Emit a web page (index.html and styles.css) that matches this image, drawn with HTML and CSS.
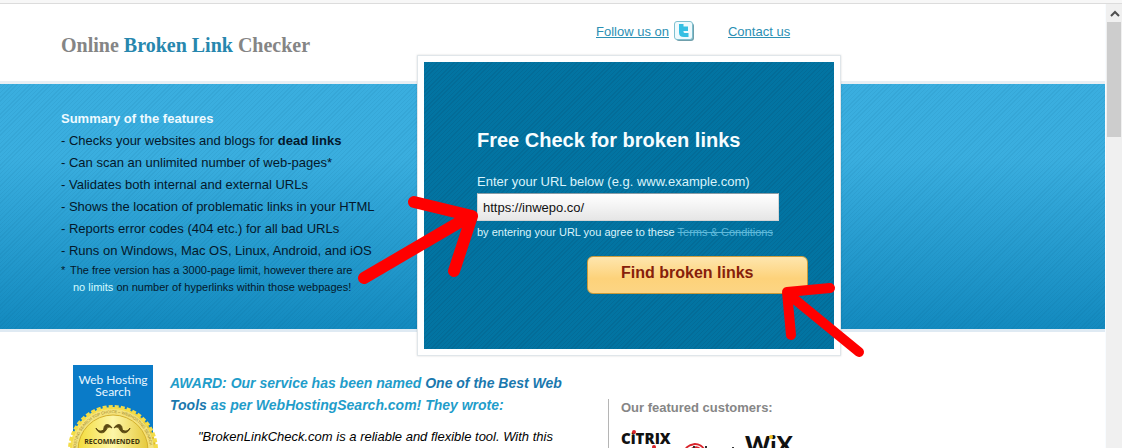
FILE: index.html
```html
<!DOCTYPE html>
<html lang="en">
<head>
  <meta charset="UTF-8" />
  <title>Online Broken Link Checker</title>
  <link rel="stylesheet" href="styles.css">
</head>
<body>
  <div class="topline"></div>

  <div class="window">
    <div class="page">

      <header>
        <h1>Online <span>Broken Link</span> Checker</h1>
        <nav>
          <a href="#follow">Follow us on</a>
          <a href="#twitter" class="twitter" aria-label="Twitter">
            <svg width="20" height="20" viewBox="0 0 20 20">
              <rect x="2" y="2" width="18" height="18" rx="3" fill="#6f9fab"/>
              <rect x=".5" y=".5" width="18" height="18" rx="2.500" fill="#effafd" stroke="#7fc0d0"/>
              <path d="M5 3v8.500Q5 16 10 16h4.500v-4H11Q9.500 12 9.500 10.500V10H14V5.500H9.500V3z" fill="#35bfe3"/>
            </svg>
          </a>
          <a href="#contact" class="contact">Contact us</a>
        </nav>
      </header>

      <!-- HERO -->
      <section class="hero">
        <div class="features">
          <h2>Summary of the features</h2>
          <ul>
            <li>- Checks your websites and blogs for <b>dead links</b></li>
            <li>- Can scan an unlimited number of web-pages*</li>
            <li>- Validates both internal and external URLs</li>
            <li>- Shows the location of problematic links in your HTML</li>
            <li>- Reports error codes (404 etc.) for all bad URLs</li>
            <li>- Runs on Windows, Mac OS, Linux, Android, and iOS</li>
          </ul>
          <div class="note">
            <span>*</span>
            <p>The free version has a 3000-page limit, however there are</p>
            <p class="limits"><a href="#pricing">no limits</a> on number of hyperlinks within those webpages!</p>
          </div>
        </div>

        <form class="checker">
          <h2>Free Check for broken links</h2>
          <label for="url">Enter your URL below (e.g. www.example.com)</label>
          <input type="text" id="url" value="https://inwepo.co/">
          <p>by entering your URL you agree to these <a href="#terms">Terms &amp; Conditions</a></p>
          <button type="button">Find broken links</button>
        </form>
      </section>

      <!-- AWARD + CUSTOMERS -->
      <section class="content">
        <svg class="badge" width="92" height="130" viewBox="0 0 92 130">
          <defs>
            <linearGradient id="gold" x1="0" y1="0" x2="1" y2="1">
              <stop offset="0" stop-color="#fff27a"/>
              <stop offset=".4" stop-color="#f0d43a"/>
              <stop offset="1" stop-color="#c79a17"/>
            </linearGradient>
            <linearGradient id="shine" x1="0" y1="0" x2="1" y2="0">
              <stop offset="0" stop-color="#f3dc3c"/>
              <stop offset=".5" stop-color="#fdf6a8"/>
              <stop offset="1" stop-color="#e6c93c"/>
            </linearGradient>
            <path id="ring" d="M9 85a37 37 0 0 1 74 0"/>
          </defs>
          <rect x="6" width="80" height="130" fill="#0a7bc8"/>
          <text class="badge-title" x="46" y="19">Web Hosting</text>
          <text class="badge-title" x="46" y="31">Search</text>
          <circle cx="46" cy="85" r="43" fill="url(#gold)"/>
          <circle cx="46" cy="85" r="43" fill="none" stroke="#f3dc48" stroke-width="4" stroke-dasharray="4 2"/>
          <circle cx="46" cy="85" r="41" fill="#f4e27c"/>
          <text class="badge-ring"><textPath href="#ring">HOSTING SEARCH TOP CHOICE – WEBHOSTING SEARCH</textPath></text>
          <circle cx="46" cy="85" r="35" fill="url(#shine)" stroke="#d3b02e"/>
          <path d="M45 63c-3-5-8-4-8 0s-6 4-8 0c2 6 8 6 10 2s4-3 6-2zM47 63c3-5 8-4 8 0s6 4 8 0c-2 6-8 6-10 2s-4-3-6-2z" fill="#5b4a12" stroke="#5b4a12"/>
          <text class="badge-label" x="45" y="79">RECOMMENDED</text>
        </svg>

        <div class="award">
          <h3>AWARD: Our service has been named <a href="#award">One of the Best Web Tools</a> as per WebHostingSearch.com! They wrote:</h3>
          <blockquote>"BrokenLinkCheck.com is a reliable and flexible tool. With this</blockquote>
        </div>

        <aside class="customers">
          <h3>Our featured customers:</h3>
          <svg width="180" height="44" viewBox="0 0 180 44">
            <text class="citrix" x="0" y="23">CiTRIX</text>
            <circle cx="13" cy="11" r="2" fill="#d8232a"/>
            <circle cx="33" cy="26" r="2" fill="#d8232a"/>
            <path d="M63 32a11 11 0 0 1 21-2M69 31a6 6 0 0 1 10-3" fill="none" stroke="#d8232a" stroke-width="2"/>
            <path d="M73 25v8M85 25v10M112 26v10" stroke="#333" stroke-width="2"/>
            <text class="wix" x="124" y="33">WiX</text>
            <circle cx="150" cy="16" r="2" fill="#f4c525"/>
          </svg>
        </aside>
      </section>
    </div>

    <div class="scrollbar">
      <svg width="16" height="17" viewBox="0 0 16 17">
        <path d="M4 11l4-4 4 4" fill="none" stroke="#505050" stroke-width="2"/>
      </svg>
      <div class="thumb"></div>
    </div>
  </div>

  <!-- hand drawn pointers on top of the page -->
  <svg class="arrows" width="1122" height="448" viewBox="0 0 1122 448">
    <path d="M364 278L470 216M414 202l58 14-18 55" stroke-width="12"/>
    <path d="M859 352L787 293M830 288l-43 4 4 43" stroke-width="10"/>
  </svg>
</body>
</html>
```

FILE: styles.css
```css
* {
  box-sizing: border-box;
}

body {
  display: flex;
  flex-direction: column;
  height: 100vh;
  margin: 0;
  overflow: hidden;
  background: #fff;
  font-family: "Liberation Sans", Arial, sans-serif;
  font-size: 13px;
}

h1, h2, h3, p, ul, blockquote {
  margin: 0;
  padding: 0;
}

.topline {
  flex: none;
  height: 4px;
  background: #f7f7f7;
  border-bottom: 1px solid #dcdcdc;
}

.window {
  display: flex;
  flex: 1;
  min-height: 0;
}

.page {
  flex: 1;
  overflow: hidden;
}

header {
  display: flex;
  height: 80px;
  padding-left: 61px;
  border-bottom: 3px solid #e8eff4;
}

h1 {
  width: 535px;
  padding-top: 29px;
  font: bold 20px/24px "Liberation Serif", "Times New Roman", serif;
  color: #858585;
}

h1 span {
  color: #2787ae;
}

nav {
  display: flex;
  align-items: center;
  height: 20px;
  margin-top: 17px;
}

nav a {
  color: #2b8fb3;
}

.twitter {
  height: 20px;
  margin-left: 5px;
}

.contact {
  margin-left: 34px;
}

/* hero */
.hero {
  display: flex;
  height: 248px;
  padding-left: 61px;
  border-bottom: 3px solid #dfeaf3;
  background:
    repeating-linear-gradient(135deg, rgba(0, 80, 120, 0.08) 0 1px, transparent 1px 3px),
    linear-gradient(#3aaedf 30%, #138abf);
}

.features {
  width: 356px;
  padding-top: 24px;
  line-height: 22px;
  color: #04182b;
}

.features h2 {
  font-size: 13px;
  color: #eefaff;
}

.features ul {
  list-style: none;
}

.note {
  display: grid;
  grid-template-columns: 9px 1fr;
  font-size: 11px;
  line-height: 17px;
}

.limits {
  grid-column: 2;
  padding-left: 3px;
}

.note a {
  color: #d5fbff;
  text-decoration: none;
}

.checker {
  display: flex;
  flex-direction: column;
  align-items: flex-start;
  width: 424px;
  height: 301px;
  margin-top: -29px;
  padding: 64px 26px 0 53px;
  border: 7px solid #fff;
  outline: 1px solid #e0e6ea;
  outline-offset: -1px;
  box-shadow: 0 0 2px rgba(0, 0, 0, 0.15);
  background: repeating-linear-gradient(135deg, #036c98 0 1px, #0274a2 1px 3px);
  color: #d9f3fb;
}

.checker h2 {
  font-size: 20px;
  line-height: 28px;
  color: #f6fdff;
}

.checker label {
  margin-top: 18px;
  line-height: 20px;
}

.checker input {
  width: 302px;
  height: 28px;
  margin-top: 1px;
  padding: 0 5px;
  border: 1px solid #d5d5d5;
  border-top-color: #8a9ca5;
  background: linear-gradient(#fff, #e6e6e6);
  font: 13px "Liberation Sans", Arial, sans-serif;
  color: #111;
}

.checker p {
  font-size: 11px;
  line-height: 22px;
}

.checker p a {
  color: #5fb9da;
  text-decoration: line-through;
}

.checker button {
  align-self: flex-end;
  width: 221px;
  height: 38px;
  margin-top: 13px;
  padding: 0 0 4px 33px;
  border: 1px solid #c99a3a;
  border-radius: 6px;
  background: linear-gradient(#fee6ae, #fdd27a 60%, #fcd584);
  font: bold 16px "Liberation Sans", Arial, sans-serif;
  text-align: left;
  color: #86200a;
  cursor: pointer;
}

/* content */
.content {
  display: flex;
  padding: 33px 0 0 67px;
}

.badge {
  flex: none;
}

.badge-title {
  fill: #e8f6ff;
  font: 12px Lato, sans-serif;
  text-anchor: middle;
}

.badge-ring {
  fill: #9a8428;
  font: 4px "Liberation Sans", sans-serif;
}

.badge-label {
  fill: #40340e;
  font: bold 7px "Open Sans", sans-serif;
  text-anchor: middle;
}

.award {
  width: 410px;
  margin-left: 11px;
  padding-top: 7px;
}

.award h3 {
  font-size: 14px;
  font-style: italic;
  line-height: 22px;
  color: #1f9dca;
}

.award a {
  color: #1a78ae;
  text-decoration: none;
}

.award blockquote {
  padding: 11px 0 0 28px;
  font-style: italic;
  line-height: 20px;
  white-space: nowrap;
}

.customers {
  margin: 34px 0 0 28px;
  padding-left: 12px;
  border-left: 1px solid #b5b5b5;
}

.customers h3 {
  font-size: 13px;
  line-height: 18px;
  color: #868686;
}

.customers svg {
  display: block;
  margin-top: 4px;
}

.citrix {
  fill: #111;
  font: 800 15px "Open Sans", sans-serif;
}

.wix {
  fill: #111;
  font: 900 24px Lato, sans-serif;
}

/* scrollbar */
.scrollbar {
  flex: none;
  width: 17px;
  padding: 1px 1px 0;
  border-left: 1px solid #f8fcff;
  background: #f0f0f0;
}

.scrollbar svg {
  display: block;
}

.thumb {
  height: 115px;
  background: #cdcdcd;
}

.arrows {
  position: absolute;
  top: 0;
  left: 0;
  fill: none;
  stroke: #f00;
  stroke-linecap: round;
  stroke-linejoin: round;
  pointer-events: none;
}
```
